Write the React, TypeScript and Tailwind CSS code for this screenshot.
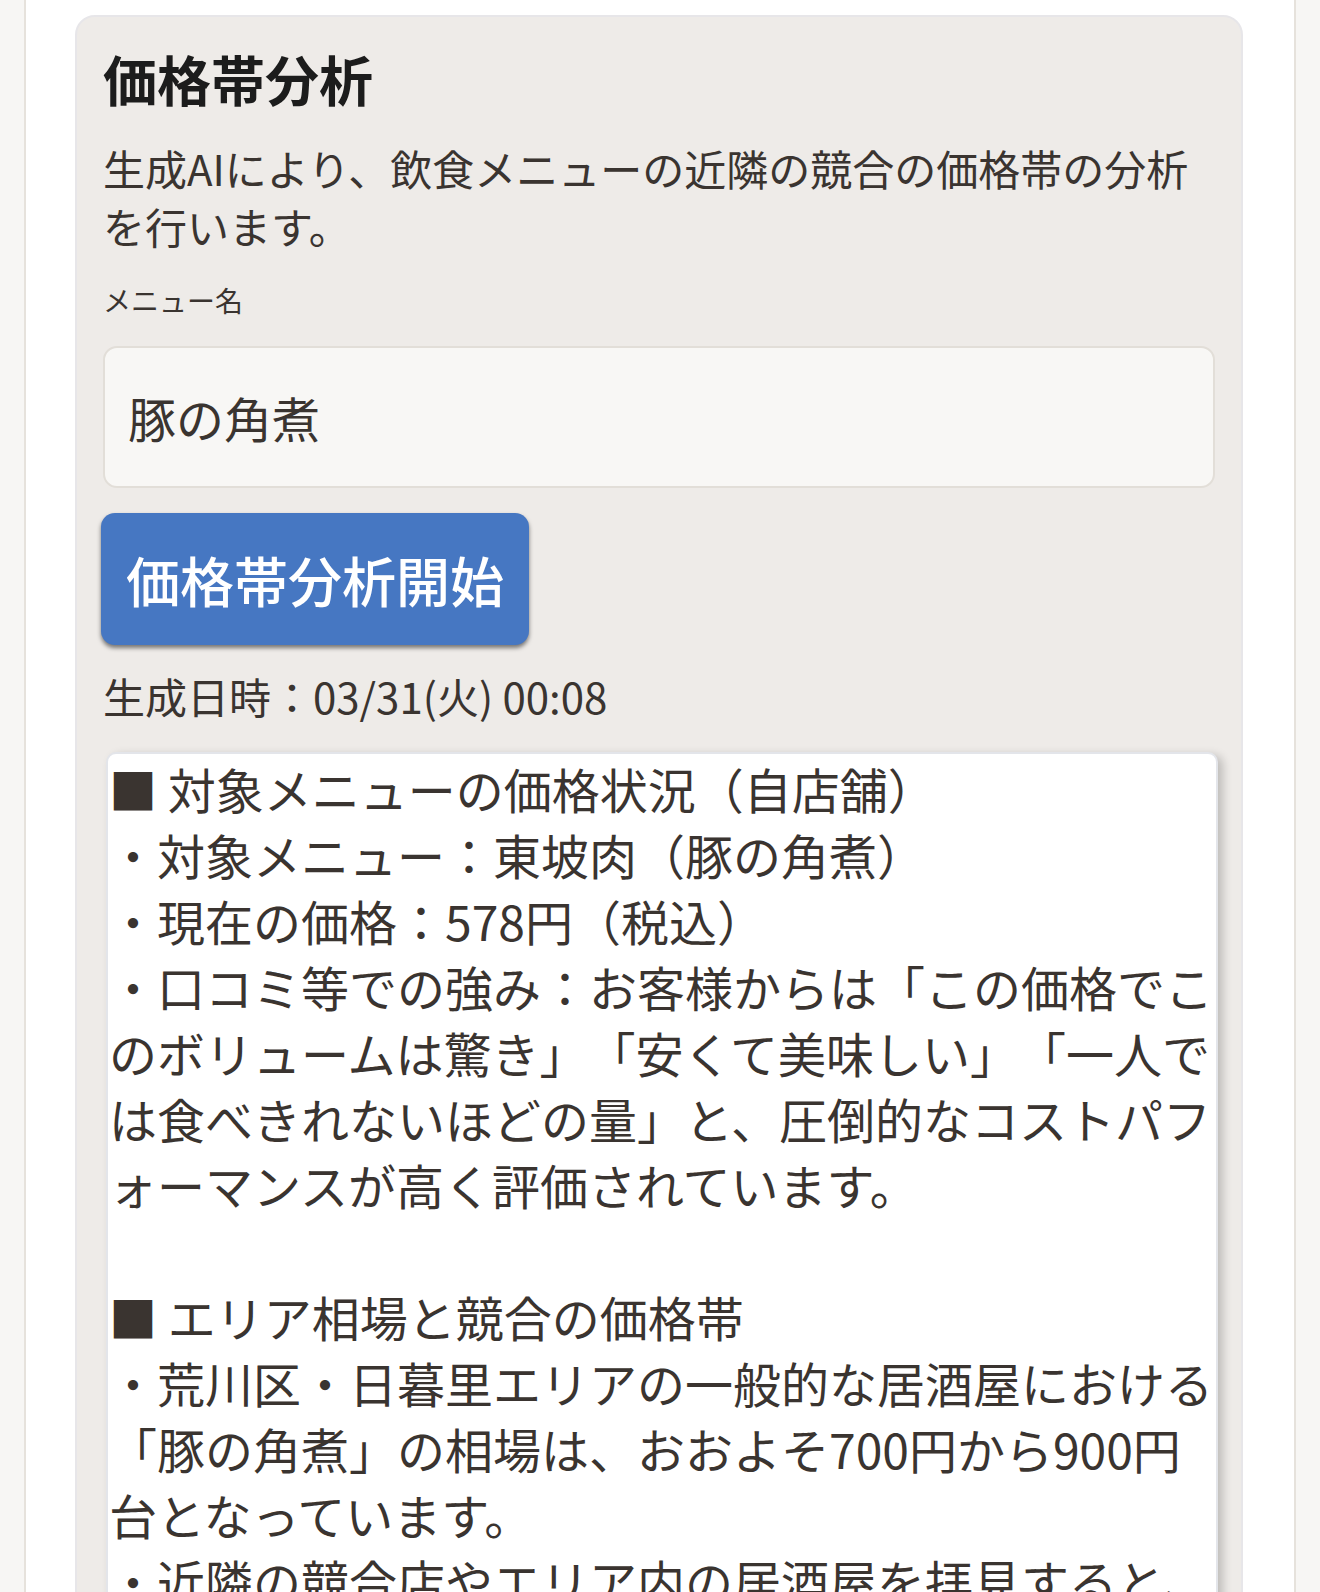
import { useState } from 'react';

const RESULT = `■ 対象メニューの価格状況（自店舗）
・対象メニュー：東坡肉（豚の角煮）
・現在の価格：578円（税込）
・口コミ等での強み：お客様からは「この価格でこのボリュームは驚き」「安くて美味しい」「一人では食べきれないほどの量」と、圧倒的なコストパフォーマンスが高く評価されています。

■ エリア相場と競合の価格帯
・荒川区・日暮里エリアの一般的な居酒屋における「豚の角煮」の相場は、おおよそ700円から900円台となっています。
・近隣の競合店やエリア内の居酒屋を拝見すると、いずれも700円〜900円前後で提供されているケースが多く見られます。`;

export default function App() {
  const [menuName, setMenuName] = useState('豚の角煮');

  return (
    <div
      className="min-h-screen bg-[#f7f6f4] [text-spacing-trim:space-all]"
      style={{ fontFamily: '"Noto Sans CJK JP", "Noto Sans", sans-serif' }}
    >
      <div className="ml-[24px] min-h-screen w-[1272px] border-x-2 border-[#e6e2dc] bg-white pt-[15px] pb-10">
        <section className="ml-[49px] w-[1168px] rounded-[20px] border-2 border-[#e7e6e9] bg-[#eeebe8] px-[26px] pt-[30px] pb-[40px]">
          {/* Header */}
          <h1 className="text-[54px] font-bold leading-[64px] text-[#1c1c1c]">価格帯分析</h1>
          <p className="mt-[28px] text-[42px] leading-[58px] text-[#3a3430]">
            生成AIにより、飲食メニューの近隣の競合の価格帯の分析を行います。
          </p>

          {/* Menu name input */}
          <label className="mt-[25px] block text-[28px] leading-[40px] text-[#3a3430]">メニュー名</label>
          <input
            value={menuName}
            onChange={(e) => setMenuName(e.target.value)}
            className="mt-[26px] block h-[142px] w-full rounded-[14px] border-2 border-[#e2ded8] bg-[#f8f7f5] pl-[23px] text-[48px] text-[#3a3430] outline-none"
          />

          <button className="-ml-[2px] mt-[25px] flex h-[132px] w-[428px] items-center justify-center rounded-[14px] bg-[#4677c2] text-[54px] font-medium text-white shadow-[0_3px_4px_rgba(0,0,0,0.5)]">
            価格帯分析開始
          </button>

          <p className="mt-[22px] text-[42px] leading-[58px] text-[#3a3430]">生成日時：03/31(火) 00:08</p>

          {/* Result */}
          <div className="ml-[3px] mt-[27px] w-[1112px] rounded-[10px] border-2 border-[#e3e5ea] bg-white px-[1px] pt-[1px] shadow-[5px_3px_10px_rgba(0,0,0,0.2)]">
            <div className="whitespace-pre-wrap text-[48px] leading-[66px] text-[#3a3430]">{RESULT}</div>
          </div>
        </section>
      </div>
    </div>
  );
}
